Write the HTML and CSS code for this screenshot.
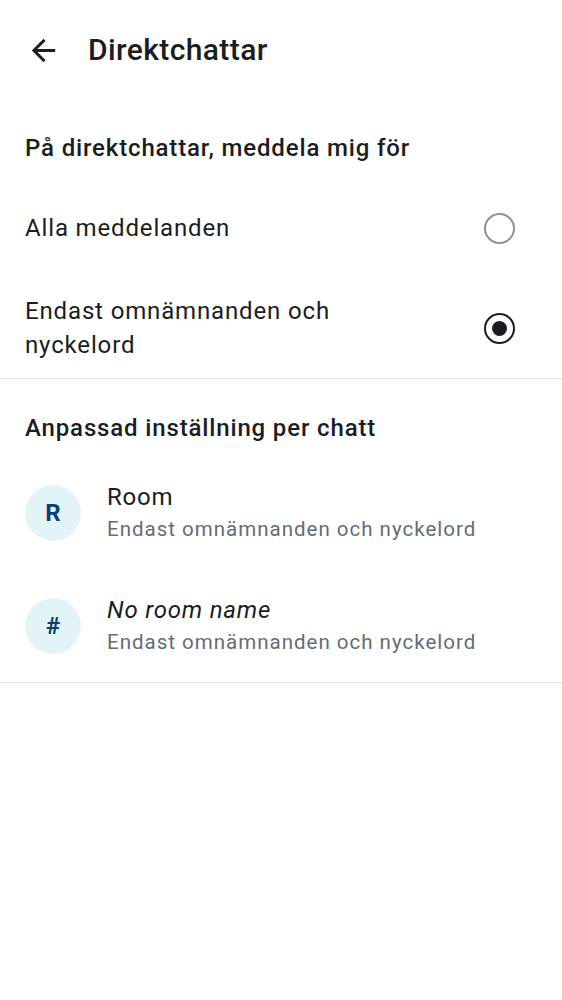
FILE: index.html
```html
<!DOCTYPE html>
<html lang="sv">
<head>
<meta charset="utf-8">
<title>Direktchattar</title>
<link rel="stylesheet" href="styles.css">
</head>
<body>
<div class="screen">
  <header class="topbar">
    <svg class="back" viewBox="0 0 24 24" width="35" height="35" aria-hidden="true"><path d="M20 11H7.83l5.59-5.59L12 4l-8 8 8 8 1.41-1.41L7.83 13H20v-2z" fill="#1b1d22"/></svg>
    <h1 class="title">Direktchattar</h1>
  </header>

  <section class="section">
    <h2 class="section-title first">På direktchattar, meddela mig för</h2>
    <div class="option">
      <span class="option-label">Alla meddelanden</span>
      <span class="radio"></span>
    </div>
    <div class="option">
      <span class="option-label">Endast omnämnanden och<br>nyckelord</span>
      <span class="radio checked"></span>
    </div>
  </section>

  <section class="section">
    <h2 class="section-title second">Anpassad inställning per chatt</h2>
    <div class="room">
      <div class="avatar">R</div>
      <div class="room-text">
        <div class="room-name">Room</div>
        <div class="room-sub">Endast omnämnanden och nyckelord</div>
      </div>
    </div>
    <div class="room">
      <div class="avatar hash">#</div>
      <div class="room-text">
        <div class="room-name italic">No room name</div>
        <div class="room-sub">Endast omnämnanden och nyckelord</div>
      </div>
    </div>
  </section>
</div>
</body>
</html>
```

FILE: styles.css
```css
* { box-sizing: border-box; }
html, body { margin: 0; padding: 0; background: #ffffff; }
body {
  font-family: Roboto, "Noto Sans", "Liberation Sans", sans-serif;
  color: #1b1d22;
}
.screen { width: 562px; }

.topbar {
  height: 100px;
  display: flex;
  align-items: center;
  padding-left: 26px;
}
.back { display: block; flex: none; }
.title {
  margin: 0 0 0 27px;
  font-size: 30px;
  font-weight: 500;
  line-height: 36px;
  letter-spacing: 0.4px;
}

.section { border-bottom: 1px solid #e1e6ec; }

.section-title {
  margin: 0;
  padding: 32px 25px 14px;
  font-size: 24px;
  font-weight: 500;
  line-height: 32px;
  letter-spacing: 0.85px;
}
.section-title.second { padding: 34px 25px 13px; line-height: 30px; }

.option {
  height: 100px;
  display: flex;
  align-items: center;
  justify-content: space-between;
  padding: 0 47px 0 25px;
}
.option-label {
  font-size: 24px;
  line-height: 34px;
  letter-spacing: 0.85px;
}
.radio {
  flex: none;
  width: 31px;
  height: 31px;
  border-radius: 50%;
  border: 2.5px solid #8a929e;
  display: flex;
  align-items: center;
  justify-content: center;
}
.radio.checked { border-color: #1b1d22; }
.radio.checked::after {
  content: "";
  width: 15px;
  height: 15px;
  border-radius: 50%;
  background: #1b1d22;
}

.room {
  height: 113px;
  display: flex;
  align-items: center;
  padding-left: 25px;
}
.avatar {
  flex: none;
  width: 56px;
  height: 56px;
  border-radius: 50%;
  background: #e3f4f8;
  color: #0b3f70;
  font-size: 24px;
  font-weight: 700;
  display: flex;
  align-items: center;
  justify-content: center;
}
.room-text { margin-left: 26px; }
.room-name { font-size: 24px; line-height: 32px; letter-spacing: 0.8px; }
.room-name.italic { font-style: italic; }
.room-sub { font-size: 20.5px; line-height: 32px; color: #656c76; letter-spacing: 1px; }
```
